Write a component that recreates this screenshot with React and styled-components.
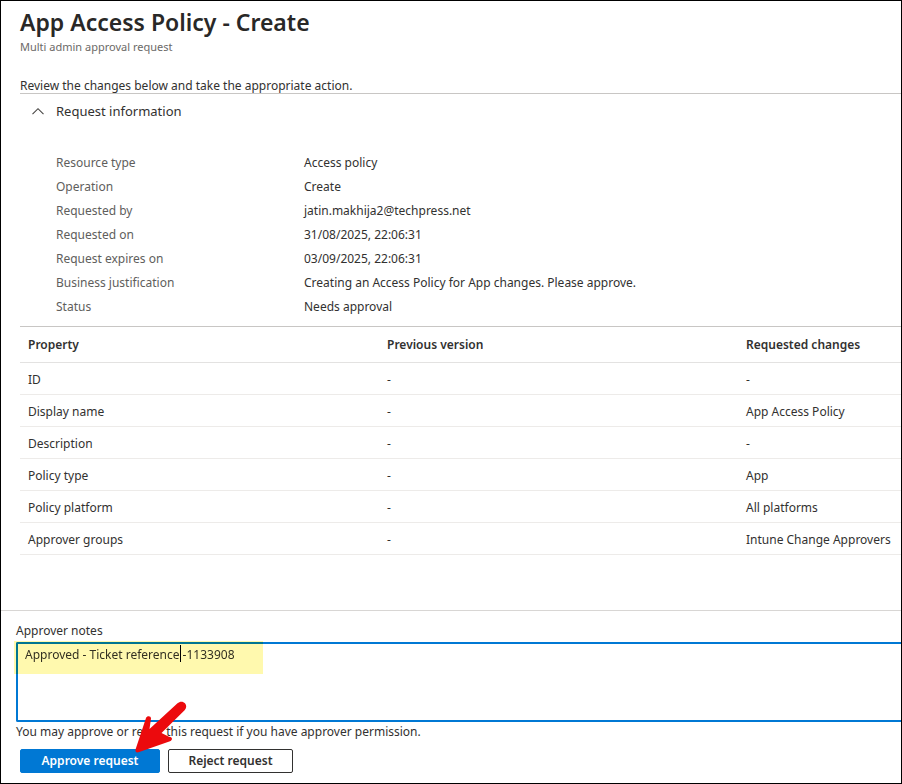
import { useState } from "react";
import styled, { createGlobalStyle, css } from "styled-components";

const GlobalStyle = createGlobalStyle`
  *,
  *::before,
  *::after {
    box-sizing: border-box;
  }

  body {
    margin: 0;
    background-color: #fff;
    color: #323130;
    font-family: "Noto Sans", "Open Sans", sans-serif;
    font-size: 12px;
    line-height: 16px;
  }
`;

const Blade = styled.div`
  display: flex;
  flex-direction: column;
  min-height: 100vh;
  border: 1px solid #000;
`;

const Content = styled.main`
  flex: 1;
  padding: 7px 0 0 19px;
`;

const Title = styled.h1`
  margin: 0;
  color: #292827;
  font-size: 23px;
  font-weight: 600;
  line-height: 28px;
`;

const Subtitle = styled.p`
  margin: 3px 0 23px;
  color: #6b6967;
  font-size: 11px;
`;

const Intro = styled.p`
  margin: 0;
  line-height: 15px;
`;

const Section = styled.section`
  border-top: 1px solid #c8c6c4;
  padding: 7px 0;
`;

const SectionToggle = styled.button`
  display: flex;
  align-items: center;
  gap: 12px;
  padding: 0 0 0 12px;
  border: none;
  background: none;
  color: inherit;
  font: inherit;
  font-size: 13px;
  line-height: 20px;
  cursor: pointer;
`;

const InfoList = styled.dl`
  display: grid;
  grid-template-columns: 248px 1fr;
  margin: 30px 0 0;
  padding-left: 36px;
  line-height: 24px;
`;

const InfoLabel = styled.dt`
  color: #605e5c;
`;

const InfoValue = styled.dd`
  margin: 0;
`;

const Table = styled.table`
  width: 100%;
  table-layout: fixed;
  border-collapse: separate;
  border-spacing: 0;
  border-top: 1px solid #c8c6c4;
`;

const HeadCell = styled.th`
  width: ${(props) => props.$width || "auto"};
  height: 36px;
  padding: 0 8px;
  border-bottom: 1px solid #e3e2e1;
  font-weight: 600;
  text-align: left;
`;

const Cell = styled.td`
  height: 32px;
  padding: 2px 0 0 8px;
  border-bottom: 1px solid #edebe9;
  white-space: nowrap;
`;

const Footer = styled.footer`
  border-top: 1px solid #d8d6d4;
  padding: 12px 0 10px 15px;
`;

const NotesLabel = styled.label`
  display: block;
  margin-bottom: 3px;
`;

const NotesField = styled.div`
  position: relative;
  isolation: isolate;
`;

const Notes = styled.textarea`
  display: block;
  width: 100%;
  height: 80px;
  padding: 3px 7px;
  border: 2px solid #0078d4;
  border-right: none;
  border-radius: 2px 0 0 2px;
  outline: none;
  resize: none;
  background-color: #fff;
  color: inherit;
  font: inherit;
`;

const Marker = styled.span`
  position: absolute;
  top: -1px;
  left: -2px;
  width: 249px;
  height: 33px;
  background-color: #fff9ae;
  mix-blend-mode: multiply;
  pointer-events: none;
`;

const Caret = styled.span`
  position: absolute;
  top: 3px;
  left: 164px;
  width: 1px;
  height: 17px;
  background-color: #000;
  pointer-events: none;
`;

const Hint = styled.p`
  margin: 2px 0 9px;
`;

const Actions = styled.div`
  position: relative;
  display: flex;
  gap: 8px;
  padding-left: 4px;
`;

const Button = styled.button`
  width: ${(props) => props.$width};
  height: 24px;
  padding: 0;
  border: 1px solid #323130;
  border-radius: 2px;
  background-color: #fff;
  color: #323130;
  font: inherit;
  font-weight: 600;
  cursor: pointer;

  ${(props) =>
    props.$primary &&
    css`
      border-color: #0078d4;
      background-color: #0078d4;
      color: #fff;
    `}
`;

const Pointer = styled.svg`
  position: absolute;
  top: -49px;
  left: 117px;
  pointer-events: none;
`;

const requestInfo = [
  { label: "Resource type", value: "Access policy" },
  { label: "Operation", value: "Create" },
  { label: "Requested by", value: "jatin.makhija2@techpress.net" },
  { label: "Requested on", value: "31/08/2025, 22:06:31" },
  { label: "Request expires on", value: "03/09/2025, 22:06:31" },
  {
    label: "Business justification",
    value: "Creating an Access Policy for App changes. Please approve.",
  },
  { label: "Status", value: "Needs approval" },
];

const changes = [
  { property: "ID", previous: "-", requested: "-" },
  { property: "Display name", previous: "-", requested: "App Access Policy" },
  { property: "Description", previous: "-", requested: "-" },
  { property: "Policy type", previous: "-", requested: "App" },
  { property: "Policy platform", previous: "-", requested: "All platforms" },
  {
    property: "Approver groups",
    previous: "-",
    requested: "Intune Change Approvers",
  },
];

function Chevron({ open }) {
  return (
    <svg width="12" height="8" viewBox="0 0 12 8" fill="none" aria-hidden="true">
      <path
        d={open ? "M0.5 7.2 6 1.7l5.5 5.5" : "M0.5 1.2 6 6.7l5.5-5.5"}
        stroke="#484644"
        strokeWidth="1.1"
      />
    </svg>
  );
}

function RequestInformation() {
  const [open, setOpen] = useState(true);

  return (
    <Section>
      <SectionToggle
        type="button"
        aria-expanded={open}
        onClick={() => setOpen(!open)}
      >
        <Chevron open={open} />
        Request information
      </SectionToggle>
      {open && (
        <InfoList>
          {requestInfo.map((item) => [
            <InfoLabel key={item.label}>{item.label}</InfoLabel>,
            <InfoValue key={item.label + "-value"}>{item.value}</InfoValue>,
          ])}
        </InfoList>
      )}
    </Section>
  );
}

function ChangesTable() {
  return (
    <Table>
      <thead>
        <tr>
          <HeadCell>Property</HeadCell>
          <HeadCell>Previous version</HeadCell>
          <HeadCell $width="163px">Requested changes</HeadCell>
        </tr>
      </thead>
      <tbody>
        {changes.map((row) => (
          <tr key={row.property}>
            <Cell>{row.property}</Cell>
            <Cell>{row.previous}</Cell>
            <Cell>{row.requested}</Cell>
          </tr>
        ))}
      </tbody>
    </Table>
  );
}

function ApprovalFooter() {
  const [notes, setNotes] = useState("Approved - Ticket reference -1133908");

  return (
    <Footer>
      <NotesLabel htmlFor="approver-notes">Approver notes</NotesLabel>
      <NotesField>
        <Notes
          id="approver-notes"
          value={notes}
          onChange={(e) => setNotes(e.target.value)}
        />
        <Marker />
        <Caret />
      </NotesField>
      <Hint>
        You may approve or reject this request if you have approver permission.
      </Hint>
      <Actions>
        <Button type="button" $primary $width="140px">
          Approve request
        </Button>
        <Button type="button" $width="125px">
          Reject request
        </Button>
        <Pointer width="56" height="56" viewBox="0 0 56 56" aria-hidden="true">
          <path
            d="M44.5 3.3C46.8 1 50.2 1.2 52 3.2C53.8 5.2 53.6 8.2 51.6 10.2L28.5 33L36 36.8C39.6 37 40 40 37 41.2L5.500 52.300C3.200 53 1.900 51.300 2.600 49.200L13 18C13.800 15.300 18.300 15.600 18 18.600L16.500 29Z"
            fill="#ec0a0d"
          />
        </Pointer>
      </Actions>
    </Footer>
  );
}

function App() {
  return (
    <>
      <GlobalStyle />
      <Blade>
        <Content>
          <Title>App Access Policy - Create</Title>
          <Subtitle>Multi admin approval request</Subtitle>
          <Intro>
            Review the changes below and take the appropriate action.
          </Intro>
          <RequestInformation />
          <ChangesTable />
        </Content>
        <ApprovalFooter />
      </Blade>
    </>
  );
}

export default App;
